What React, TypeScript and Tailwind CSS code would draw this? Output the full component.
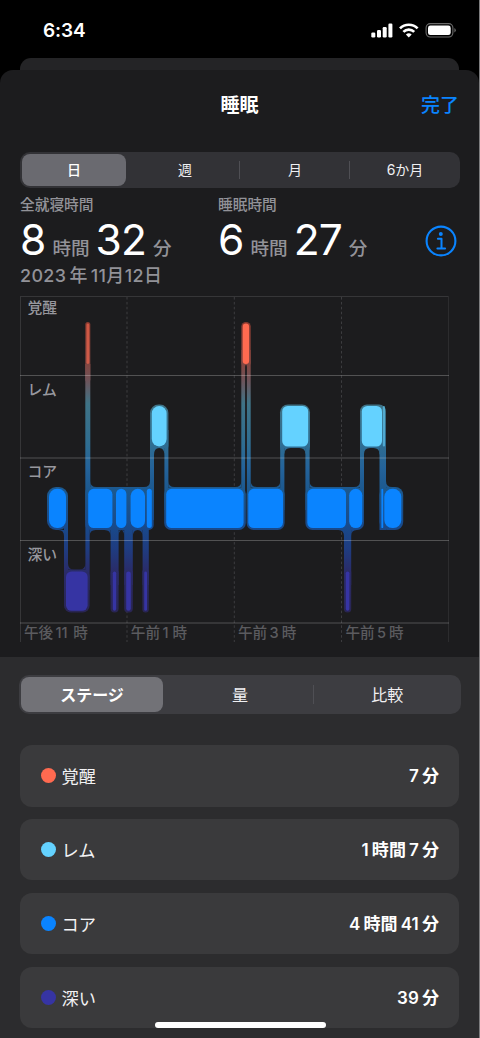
interface Segment {
  x: number
  w: number
  dim?: boolean
}

interface DurationProps {
  parts: string[]
}

interface TabsProps {
  items: string[]
  size: 'md' | 'lg'
}

const STAGES = [
  { name: '覚醒', dot: 'bg-[#ff6a50]', total: ['7', '分'] },
  { name: 'レム', dot: 'bg-[#64d2ff]', total: ['1', '時間', '7', '分'] },
  { name: 'コア', dot: 'bg-[#0a84ff]', total: ['4', '時間', '41', '分'] },
  { name: '深い', dot: 'bg-[#3634a3]', total: ['39', '分'] },
]

const ROWS: { fill: string; y: number; segments: Segment[] }[] = [
  {
    fill: '#ff6a50',
    y: 323.5,
    segments: [{ x: 86.5, w: 2.8, dim: true }, { x: 242.7, w: 6.4 }],
  },
  {
    fill: '#64d2ff',
    y: 406,
    segments: [
      { x: 151.8, w: 14.8 },
      { x: 282.2, w: 26 },
      { x: 361.8, w: 20.2 },
      { x: 382.8, w: 2.2, dim: true },
    ],
  },
  {
    fill: '#0a84ff',
    y: 488.8,
    segments: [
      { x: 49, w: 17 },
      { x: 88.2, w: 24.2 },
      { x: 116, w: 10.4 },
      { x: 130.6, w: 14.4 },
      { x: 146.8, w: 5 },
      { x: 166.2, w: 77.4 },
      { x: 248.3, w: 34.7 },
      { x: 307.3, w: 38.7 },
      { x: 349.2, w: 13.1 },
      { x: 381.4, w: 1.8 },
      { x: 384.3, w: 17 },
    ],
  },
  {
    fill: '#3634a3',
    y: 571.5,
    segments: [
      { x: 66, w: 21.6 },
      { x: 112.8, w: 3.4 },
      { x: 126.2, w: 4.6 },
      { x: 144.2, w: 2.8 },
      { x: 345.8, w: 3.6 },
    ],
  },
]

// [x, y, width, height, radius] of the halo behind the blocks
const HALO = [
  [85.3, 322, 5, 60, 2.5],
  [241.3, 322, 9.4, 45, 4.5],
  [150, 404.4, 18.4, 50, 8.5],
  [280, 404.4, 30, 50, 8],
  [360, 404.4, 26, 50, 7],
  [47, 487, 21, 43, 9],
  [85.3, 487, 68.4, 43, 5],
  [164.2, 487, 81.6, 43, 7],
  [246.6, 487, 38, 43, 7],
  [305.4, 487, 58.6, 43, 7],
  [379.5, 487, 23.7, 43, 8],
  [64, 569, 25.6, 43.6, 7],
  [110.6, 569, 8, 43.6, 4],
  [124.2, 569, 8.6, 43.6, 4],
  [142.4, 569, 6.4, 43.6, 3],
  [344, 569, 7.2, 43.6, 3.5],
]

// [x, top, width, bottom] of the links between stages
const LINKS = [
  [85.3, 364, 5, 520],
  [150, 430, 4, 520],
  [164.4, 430, 4, 510],
  [241.3, 350, 3.8, 510],
  [246.9, 350, 3.8, 510],
  [280.2, 430, 4.2, 510],
  [305.4, 430, 4.2, 510],
  [360, 430, 4, 510],
  [379.5, 425, 6.5, 530],
  [64, 510, 4, 590],
  [85.4, 510, 4.2, 590],
  [110.6, 520, 8, 585],
  [124.2, 520, 8.6, 585],
  [142.6, 520, 6.2, 585],
  [344, 520, 7.2, 585],
]

// [x, y, signed radius x, signed radius y] of the concave corners
const FILLETS = [
  [90.3, 487, 6, -6],
  [150, 487, -6, -6],
  [154, 448, 5.2, 7],
  [164.4, 448, -5.2, 7],
  [168.4, 487, 6, -6],
  [241.3, 487, -6, -6],
  [245.1, 365, 1, 1],
  [246.9, 365, -1, 1],
  [250.7, 487, 6, -6],
  [280.2, 487, -6, -6],
  [284.4, 448, 6, 6],
  [305.4, 448, -6, 6],
  [309.6, 487, 6, -6],
  [360, 487, -6, -6],
  [364, 448, 6, 6],
  [379.5, 448, -6, 6],
  [386, 487, 6, -6],
  [64, 530, -5.5, 6],
  [68, 569.5, 6, -6],
  [85.4, 569.5, -6, -6],
  [89.6, 530, 6, 6],
  [110.6, 530, -6, 6],
  [118.6, 530.5, 2.8, 6],
  [124.2, 530.5, -2.8, 6],
  [132.8, 530, 4.9, 7],
  [142.6, 530, -4.9, 7],
  [344, 530, -5.5, 6],
  [351.2, 530, 5.5, 6],
]

const HOURS = [
  { x: [24, 55.5, 73.2], label: ['午後', '11', '時'] },
  { x: [130.8, 162.6, 172.5], label: ['午前', '1', '時'] },
  { x: [238, 269.6, 281.7], label: ['午前', '3', '時'] },
  { x: [345.4, 377, 389], label: ['午前', '5', '時'] },
]

function StatusBar() {
  return (
    <div className="flex h-[58px] items-start justify-between pt-[17px] pr-[22px] pl-[43px]">
      <span className="text-[19px] leading-7 font-semibold tracking-[-0.1px]">6:34</span>
      <svg width="86" height="18" viewBox="0 0 86 18" className="mt-[5px]" fill="#fff">
        <rect x="0.3" y="10.5" width="4" height="5" rx="1.2" />
        <rect x="6" y="8" width="4" height="7.5" rx="1.2" />
        <rect x="11.7" y="5" width="4" height="10.5" rx="1.2" />
        <rect x="17.4" y="1.5" width="4" height="14" rx="1.2" />
        <g fill="none" stroke="#fff" strokeWidth="2.7">
          <path d="M29 6.4a12.4 12.4 0 0 1 17.6 0" />
          <path d="M32.4 9.9a7.6 7.6 0 0 1 10.8 0" />
        </g>
        <path d="M37.8 15.6l-2.9-3a4.2 4.2 0 0 1 5.8 0z" />
        <rect x="55.1" y="1.6" width="26.8" height="13.4" rx="4.2" fill="none" stroke="#6b6b6b" strokeWidth="1.1" />
        <rect x="57" y="3.5" width="22.7" height="9.6" rx="2.4" />
        <path d="M83.4 6a2.6 2.6 0 0 1 0 4.6z" fill="#6b6b6b" />
      </svg>
    </div>
  )
}

function RangeTabs({ items, size }: TabsProps) {
  const large = size === 'lg'
  return (
    <div
      className={
        large
          ? 'mr-[18px] ml-[19px] grid h-[39px] grid-cols-3 rounded-[10px] bg-[#3d3d41] text-base'
          : 'mr-[19px] ml-5 grid h-9 grid-cols-4 rounded-[10px] bg-[#323236] text-sm'
      }
    >
      {items.map((item, i) =>
        i === 0 ? (
          <div key={item} className="flex items-stretch py-0.5 pl-0.5">
            <div
              className={
                large
                  ? 'flex w-[142px] shrink-0 items-center justify-center rounded-[8px] bg-[#727277] font-bold'
                  : 'flex w-[104px] shrink-0 items-center justify-center rounded-[8px] bg-[#6a6a70] font-medium'
              }
            >
              {item}
            </div>
          </div>
        ) : (
          <div key={item} className="relative flex items-center justify-center text-[#f0f0f2]">
            {item}
            {i < items.length - 1 && <span className="absolute top-1/4 right-0 h-1/2 w-px bg-[#4f4f54]" />}
          </div>
        )
      )}
    </div>
  )
}

function BigDuration({ parts }: DurationProps) {
  return (
    <div className="-mt-px flex h-[51px] items-baseline">
      {parts.map((part, i) =>
        i % 2 === 0 ? (
          <span key={i} className="text-[42.5px] leading-[50px] font-normal tracking-[-0.9px]">
            {part}
          </span>
        ) : (
          <span key={i} className="mr-[6px] ml-[7px] text-[18.6px] font-medium text-[#929298]">
            {part}
          </span>
        )
      )}
    </div>
  )
}

function StageChart() {
  return (
    <svg width="430" height="347" viewBox="20 296 430 347" className="ml-5 block">
      <defs>
        <linearGradient id="halo" gradientUnits="userSpaceOnUse" x1="0" y1="322" x2="0" y2="613">
          <stop offset="0" stopColor="#87392f" />
          <stop offset="0.14" stopColor="#84453f" />
          <stop offset="0.2" stopColor="#6e5359" />
          <stop offset="0.28" stopColor="#3f7386" />
          <stop offset="0.42" stopColor="#2f6d91" />
          <stop offset="0.5" stopColor="#24639a" />
          <stop offset="0.58" stopColor="#1c588e" />
          <stop offset="0.7" stopColor="#184a8b" />
          <stop offset="0.78" stopColor="#1f3c80" />
          <stop offset="0.86" stopColor="#2a2b68" />
          <stop offset="1" stopColor="#292553" />
        </linearGradient>
      </defs>

      <g fill="none" stroke="#3c3c3f" strokeWidth="1">
        <path d="M20 296.5H449" stroke="#363638" />
        <path d="M20.5 296V642" stroke="#363638" />
        <path d="M448.5 296V642" stroke="#2c2c2e" />
        <path d="M127 297V642M234.3 297V642M341.5 297V642" strokeDasharray="2.6 2.3" />
      </g>

      <g fill="url(#halo)">
        {HALO.map(([x, y, w, h, r], i) => (
          <rect key={i} x={x} y={y} width={w} height={h} rx={r} />
        ))}
      </g>
      {/* hollow areas between a raised block's two links */}
      <g fill="#1c1c1e">
        <rect x="245.1" y="365" width="1.8" height="100" />
        <rect x="154" y="448" width="10.4" height="20" />
        <rect x="284.4" y="448" width="21" height="20" />
        <rect x="364" y="448" width="15.5" height="20" />
        <rect x="68" y="560" width="17.4" height="9.5" />
      </g>
      <g fill="url(#halo)">
        {LINKS.map(([x, top, w, bottom], i) => (
          <rect key={i} x={x} y={top} width={w} height={bottom - top} />
        ))}
        {FILLETS.map(([x, y, rx, ry], i) => (
          <path key={i} d={`M${x} ${y}h${rx}Q${x} ${y} ${x} ${y + ry}Z`} />
        ))}
      </g>

      {ROWS.map((row) => (
        <g key={row.fill} fill={row.fill}>
          {row.segments.map((s) => (
            <rect
              key={s.x}
              x={s.x}
              y={row.y}
              width={s.w}
              height={row.y > 480 ? 39.3 : 40.5}
              rx={Math.min(s.w / 2, s.w > 18 ? 5.5 : 8)}
              opacity={s.dim ? 0.6 : 1}
            />
          ))}
        </g>
      ))}

      <path d="M20 375.5H449M20 458H449M20 540.5H449M20 623H449" stroke="#fff" strokeOpacity="0.24" />

      <g fill="#98989e" fontSize="14.8" fontWeight="500">
        <text x="27.5" y="312.5">覚醒</text>
        <text x="27.5" y="394.5">レム</text>
        <text x="27.5" y="476.5">コア</text>
        <text x="27.5" y="559.5">深い</text>
      </g>
      <g fill="#5b5b5f" fontSize="14.6" fontWeight="500">
        {HOURS.map((h) => (
          <text key={h.x[0]} y="638">
            {h.label.map((part, i) => (
              <tspan key={i} x={h.x[i]}>
                {part}
              </tspan>
            ))}
          </text>
        ))}
      </g>
    </svg>
  )
}

function StageRow({ name, dot, total }: { name: string; dot: string; total: string[] }) {
  return (
    <div className="flex h-[61.5px] items-center rounded-xl bg-[#3a3a3c] pr-[20px] pl-[20.5px]">
      <span className={`size-[15px] rounded-full ${dot}`} />
      <span className="ml-1.5 pt-[2px] text-[17.2px] text-[#f2f2f4]">{name}</span>
      <span className="ml-auto flex items-baseline gap-[3px] pt-[2px] text-[17px] font-semibold tracking-[0.1px]">
        {total.map((part, i) => (
          <span key={i}>{part}</span>
        ))}
      </span>
    </div>
  )
}

export default function App() {
  return (
    <div className="relative flex h-[1038px] w-[480px] flex-col overflow-hidden border-r border-[#7c7c7e] bg-black font-['Inter','Noto_Sans_CJK_JP',sans-serif] text-white">
      <StatusBar />
      <div className="mx-5 h-3 shrink-0 rounded-t-[11px] bg-[#242426]" />

      <div className="flex flex-1 flex-col rounded-t-[13px] bg-[#1c1c1e]">
        <header className="grid h-[82px] grid-cols-3 items-start pt-[22px] text-[19px] leading-7">
          <h1 className="col-start-2 text-center font-semibold">睡眠</h1>
          <button className="mr-[20px] text-right font-medium text-[#0a84ff]">完了</button>
        </header>

        <RangeTabs items={['日', '週', '月', '6か月']} size="md" />

        <section className="flex h-[108px] px-5 pt-1.5">
          <div className="w-[198px]">
            <p className="text-[14.7px] leading-[22px] font-medium text-[#929298]">全就寝時間</p>
            <BigDuration parts={['8', '時間', '32', '分']} />
            <p className="text-[17.9px] leading-5 font-medium tracking-[0.4px] text-[#929298]">
              2023<span className="mx-[3px]">年</span>11月12日
            </p>
          </div>
          <div>
            <p className="text-[14.7px] leading-[22px] font-medium text-[#929298]">睡眠時間</p>
            <BigDuration parts={['6', '時間', '27', '分']} />
          </div>
          <svg width="32" height="32" viewBox="0 0 32 32" className="mt-[31px] mr-[2px] ml-auto" fill="none" stroke="#0a84ff">
            <circle cx="16" cy="16" r="14.4" strokeWidth="2.1" />
            <circle cx="15.8" cy="9" r="2" fill="#0a84ff" stroke="none" />
            <path d="M12.9 13.8h3.6v9.7M12.4 23.5h7.7" strokeWidth="2" strokeLinecap="round" strokeLinejoin="round" />
          </svg>
        </section>

        <StageChart />

        <section className="mt-3.5 flex-1 bg-[#2c2c2e] pt-[18px]">
          <RangeTabs items={['ステージ', '量', '比較']} size="lg" />
          <div className="mx-5 mt-[31px] flex flex-col gap-[12.4px]">
            {STAGES.map((stage) => (
              <StageRow key={stage.name} {...stage} />
            ))}
          </div>
        </section>
      </div>

      <div className="absolute bottom-[10px] left-[155px] h-[6.5px] w-[171px] rounded-full bg-white" />
    </div>
  )
}
